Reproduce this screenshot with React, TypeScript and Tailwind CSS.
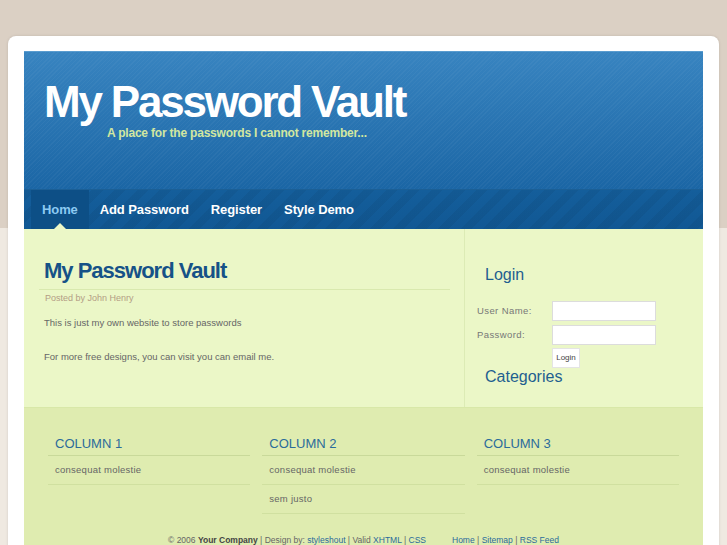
import React from "react";

const font = "font-['Liberation_Sans',Arial,sans-serif]";

const navItems = ["Home", "Add Password", "Register", "Style Demo"];

const columns = [
  { title: "COLUMN 1", items: ["consequat molestie"] },
  { title: "COLUMN 2", items: ["consequat molestie", "sem justo"] },
  { title: "COLUMN 3", items: ["consequat molestie"] },
];

export default function App() {
  return (
    <div
      className={`${font} min-h-[545px] overflow-hidden bg-[linear-gradient(to_bottom,#dbd0c4_228px,#efe9e1_228px)] pt-[36px]`}
    >
      {/* white card */}
      <div className="mx-[8px] rounded-t-[8px] bg-white px-[16px] pt-[15px] shadow-[0_0_3px_rgba(0,0,0,0.12)]">
        {/* header */}
        <div className="relative h-[138px] bg-[repeating-linear-gradient(135deg,rgba(255,255,255,0.035)_0px,rgba(255,255,255,0.035)_1px,transparent_1px,transparent_3px),linear-gradient(to_bottom,#3884c0,#1b66a5)] border-t border-[#5a9ccf]">
          <h1 className="pl-[20px] pt-[28px] text-[44px] font-bold leading-[44px] tracking-[-2.2px] text-white">
            My Password Vault
          </h1>
          <p className="mt-[2px] pl-[83px] text-[12px] font-bold leading-[14px] tracking-[-0.2px] text-[#d2e7a0]">
            A place for the passwords I cannot remember...
          </p>
        </div>

        {/* nav */}
        <div className="relative flex h-[40px] bg-[repeating-linear-gradient(135deg,rgba(0,0,0,0.05)_0px,rgba(0,0,0,0.05)_8px,transparent_8px,transparent_16px),linear-gradient(#145e9b,#115894)] pl-[7px] border-t border-[#1b5f96]">
          {navItems.map((item, i) => (
            <a
              key={item}
              className={`relative flex items-center px-[11px] text-[13px] font-bold tracking-[-0.1px] ${
                i === 0 ? "bg-[#0d4f86] text-[#8ccaf2]" : "text-white"
              }`}
            >
              {item}
              {i === 0 && (
                <span className="absolute bottom-0 left-1/2 -ml-[6px] h-0 w-0 border-x-[6px] border-b-[6px] border-x-transparent border-b-[#ebf7c7]" />
              )}
            </a>
          ))}
        </div>

        {/* content */}
        <div className="flex h-[178px] bg-[#ebf7c7]">
          <div className="w-[441px] border-r border-[#dcebb5] pl-[15px] pr-[14px] pt-[29px]">
            <h2 className="border-b border-[#d9e9ae] pb-[5px] pl-[5px] text-[22px] font-bold leading-[26px] tracking-[-1px] text-[#165287]">
              My Password Vault
            </h2>
            <p className="pl-[6px] pt-[2px] text-[9px] leading-[12px] text-[#b39d85]">
              Posted by John Henry
            </p>
            <p className="pl-[5px] pt-[13px] text-[9.5px] leading-[12px] text-[#666]">
              This is just my own website to store passwords
            </p>
            <p className="pl-[5px] pt-[22px] text-[9.5px] leading-[12px] text-[#666]">
              For more free designs, you can visit you can email me.
            </p>
          </div>
          <div className="flex-1 pt-[37px]">
            <h3 className="pl-[20px] text-[16px] leading-[18px] text-[#1f5f90]">Login</h3>
            <div className="pl-[12px] pt-[15px] text-[9.5px] text-[#777]">
              <div className="flex h-[24px] items-center">
                <span className="w-[75px] tracking-[0.4px]">User Name:</span>
                <input className="h-[20px] w-[104px] border border-[#dcdcdc] bg-white outline-none" />
              </div>
              <div className="flex h-[24px] items-center">
                <span className="w-[75px] tracking-[0.4px]">Password:</span>
                <input
                  type="password"
                  className="h-[20px] w-[104px] border border-[#dcdcdc] bg-white outline-none"
                />
              </div>
              <div className="flex pl-[75px] pt-[1px]">
                <button className="h-[20px] w-[28px] border border-[#e4e4e4] bg-white text-[8px] text-[#444]">
                  Login
                </button>
              </div>
            </div>
            <h3 className="pl-[20px] text-[16px] leading-[18px] text-[#1f5f90]">
              Categories
            </h3>
          </div>
        </div>

        {/* footer */}
        <div className="h-[160px] border-t border-[#d8e8a8] bg-[#dfecb0]">
          <div className="grid grid-cols-3 gap-[12px] px-[24px] pt-[28px]">
            {columns.map((col) => (
              <div key={col.title}>
                <h4 className="border-b border-[#c9d99a] pb-[4px] pl-[7px] text-[13px] leading-[15px] text-[#2b6b9b]">
                  {col.title}
                </h4>
                {col.items.map((it) => (
                  <div
                    key={it}
                    className="flex h-[29px] items-center border-b border-[#d0e0a0] pl-[7px] text-[9.5px] tracking-[0.25px] text-[#666]"
                  >
                    {it}
                  </div>
                ))}
              </div>
            ))}
          </div>
          <p className="pt-[20px] text-center text-[8.5px] text-[#666]">
            © 2006 <b className="text-[#444]">Your Company</b> | Design by:{" "}
            <a className="text-[#2b6b9b]">styleshout</a> | Valid{" "}
            <a className="text-[#2b6b9b]">XHTML</a> | <a className="text-[#2b6b9b]">CSS</a>
            <span className="inline-block w-[26px]" />
            <a className="text-[#2b6b9b]">Home</a> | <a className="text-[#2b6b9b]">Sitemap</a> |{" "}
            <a className="text-[#2b6b9b]">RSS Feed</a>
          </p>
        </div>
      </div>
    </div>
  );
}
